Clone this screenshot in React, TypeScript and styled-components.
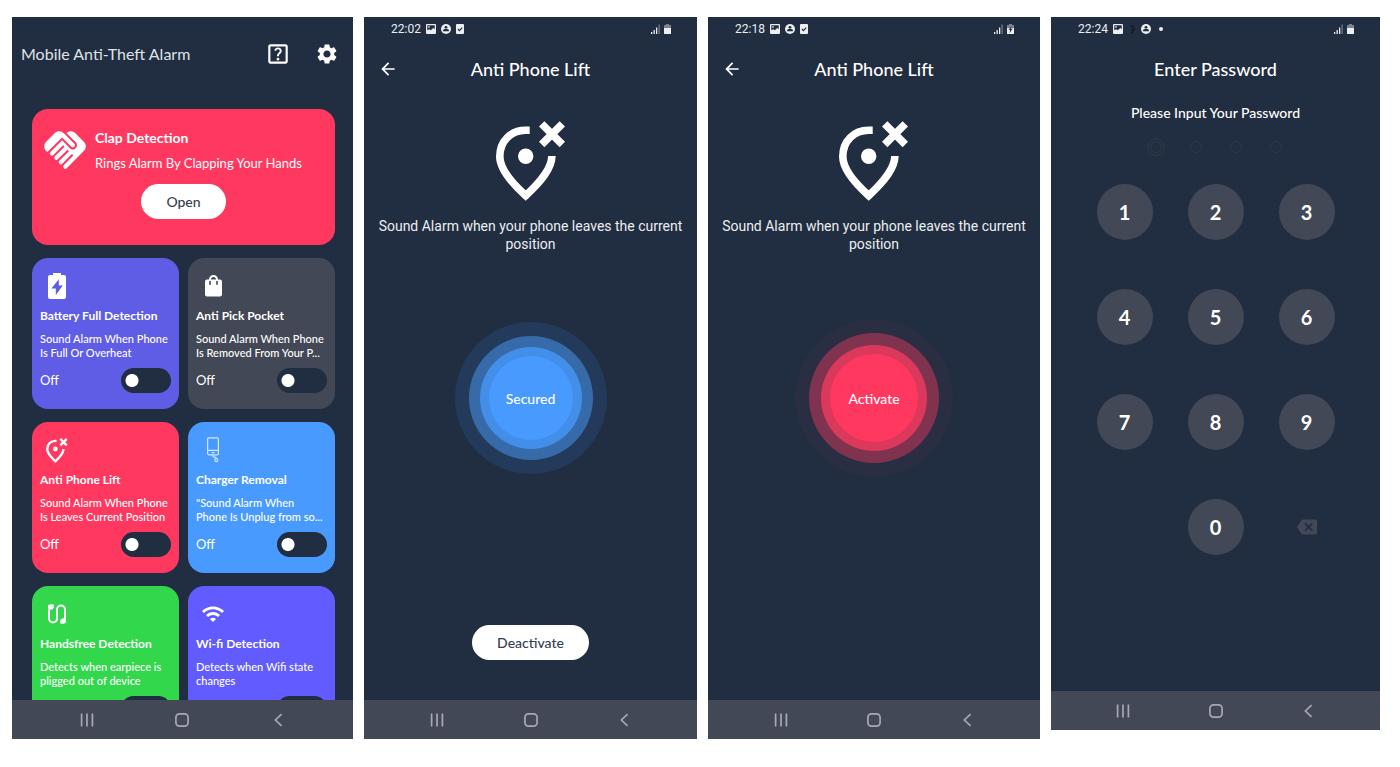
import React from "react";
import styled, { createGlobalStyle, css } from "styled-components";
import {
  MdArrowBack,
  MdBackspace,
  MdHandshake,
  MdOutlineHelpCenter,
  MdSettings,
  MdWifi,
} from "react-icons/md";

const color = {
  night: "#212d40",
  slate: "#424855",
  red: "#ff385f",
  blue: "#489aff",
  indigo: "#5f5ce6",
  violet: "#625bff",
  green: "#32d74b",
  faint: "#303a4d",
  navIcon: "#a5a9b3",
};

const GlobalStyle = createGlobalStyle`
  * { box-sizing: border-box; }
  body {
    margin: 0;
    background: #fff;
    color: #fff;
    font-family: Lato, "Open Sans", sans-serif;
  }
  h1, h2, p { margin: 0; font-weight: 400; }
  button { border: 0; padding: 0; font: inherit; color: inherit; background: none; cursor: pointer; }
  svg { display: block; flex: none; }
`;

const Gallery = styled.main`
  display: grid;
  grid-template-columns: 341fr 333fr 332fr 329fr;
  grid-template-rows: minmax(0, 1fr);
  gap: 11px;
  height: 100vh;
  min-height: 740px;
  padding: 17px 20px 28px 12px;

  @media (max-width: 1180px) {
    grid-template-columns: 1fr 1fr;
    grid-template-rows: none;
    grid-auto-rows: 722px;
    height: auto;
  }
`;

const Phone = styled.section<{ $short?: boolean }>`
  display: flex;
  flex-direction: column;
  min-width: 0;
  background: ${color.night};
  margin-bottom: ${(p) => (p.$short ? "9px" : "0")};
`;

const Screen = styled.div`
  display: flex;
  flex: 1;
  flex-direction: column;
  align-items: center;
  min-height: 0;
`;

/* ---------- system bars ---------- */

const NavBar = styled.nav`
  display: grid;
  grid-template-columns: repeat(3, 1fr);
  flex: none;
  height: 39px;
  padding: 0 8%;
  background: ${color.slate};
  color: ${color.navIcon};
`;

const NavButton = styled.button`
  display: flex;
  align-items: center;
  justify-content: center;
`;

const StatusBar = styled.div`
  display: flex;
  flex: none;
  align-items: center;
  justify-content: space-between;
  height: 24px;
  padding: 0 26px 0 27px;
  color: #eceef1;
  font: 12px/24px Roboto, sans-serif;
`;

const StatusGroup = styled.div<{ $gap: number }>`
  display: flex;
  align-items: center;
  gap: ${(p) => p.$gap}px;
`;

const SystemNav = () => (
  <NavBar aria-label="System navigation">
    <NavButton aria-label="Recent apps">
      <svg width="14" height="14" viewBox="0 0 14 14" stroke="currentColor" strokeWidth="1.7">
        <path d="M1.6 .6v12.800M7 .6v12.800M12.4 .6v12.800" />
      </svg>
    </NavButton>
    <NavButton aria-label="Home">
      <svg width="14" height="14" viewBox="0 0 14 14" fill="none" stroke="currentColor" strokeWidth="1.7">
        <rect x="0.9" y="0.9" width="12.2" height="12.2" rx="3.6" />
      </svg>
    </NavButton>
    <NavButton aria-label="Back">
      <svg width="14" height="14" viewBox="0 0 14 14" fill="none" stroke="currentColor" strokeWidth="1.7">
        <path d="M10.6 1.2 4.4 7l6.2 5.8" />
      </svg>
    </NavButton>
  </NavBar>
);

const PictureIcon = () => (
  <svg width="10" height="10" viewBox="0 0 10 10" fill="currentColor">
    <path fillRule="evenodd" d="M1 0h8a1 1 0 0 1 1 1v8a1 1 0 0 1-1 1H1a1 1 0 0 1-1-1V1a1 1 0 0 1 1-1zm.3 1.3v4.9l2-1 1.6 1L7.200 3.900 8.700 5.200V1.300z" />
    <circle cx="3" cy="2.900" r=".8" />
  </svg>
);

const PersonIcon = () => (
  <svg width="10" height="10" viewBox="0 0 10 10">
    <circle cx="5" cy="5" r="5" fill="currentColor" />
    <circle cx="5" cy="3.300" r="1.400" fill={color.night} />
    <path d="M2.100 7.300V5.900c0-.5 1.200-1 2.900-1s2.900.5 2.900 1v1.400z" fill={color.night} />
  </svg>
);

const TaskIcon = () => (
  <svg width="8" height="10" viewBox="0 0 8 10">
    <rect width="8" height="10" rx="1" fill="currentColor" />
    <path d="m2 5 1.500 1.600L6.200 3.600" fill="none" stroke={color.night} strokeWidth="1.200" />
  </svg>
);

const GhostIcon = () => (
  <svg width="8" height="10" viewBox="1 0 8 10" fill="none" strokeWidth="1.200">
    <path d="M3 2.200h4.500L6.800 7" stroke="#14171f" />
    <path d="M5.400 4.200v4.600H3.600" stroke="#14171f" />
    <path d="M7.800 1.600v1.600" stroke="#4a2a3a" />
  </svg>
);

const SignalIcon = () => (
  <svg width="9" height="10" viewBox="0 0 9 10" fill="currentColor">
    <path d="M0 8h1.300v2H0zM2.500 6h1.300v4H2.500zM5 3.500h1.300V10H5z" />
    <path d="M7.500.5h1.300V10H7.500z" opacity=".4" />
  </svg>
);

const BatteryIcon = ({ charging }: { charging?: boolean }) => (
  <svg width="7" height="10" viewBox="0 0 7 10" fill="currentColor">
    <path d="M2 0h3v1h2v3H0V1h2z" opacity=".45" />
    <path d="M0 4h7v5.500a.5.5 0 0 1-.5.5h-6a.5.5 0 0 1-.5-.5z" />
    {charging && <path d="M4.600 2 1.500 5.800h1.700L2.600 9l3-4.200H3.900z" fill={color.night} />}
  </svg>
);

const NoticeDot = styled.span`
  width: 4px;
  height: 4px;
  margin-left: 3px;
  border-radius: 50%;
  background: currentColor;
`;

type StatusProps = { time: string; charging?: boolean; overflow?: boolean };

const Status = ({ time, charging, overflow }: StatusProps) => (
  <StatusBar>
    <StatusGroup $gap={5}>
      <time>{time}</time>
      <PictureIcon />
      {overflow && <GhostIcon />}
      <PersonIcon />
      {overflow ? <NoticeDot /> : <TaskIcon />}
    </StatusGroup>
    <StatusGroup $gap={4}>
      <SignalIcon />
      <BatteryIcon charging={charging} />
    </StatusGroup>
  </StatusBar>
);

/* ---------- shared pieces ---------- */

const AppBar = styled.header`
  display: grid;
  grid-template-columns: 40px 1fr 40px;
  align-items: center;
  align-self: stretch;
  height: 56px;
  flex: none;
`;

const BackButton = styled.button`
  display: flex;
  justify-content: flex-end;
  padding-right: 6px;
`;

const ScreenTitle = styled.h1`
  grid-column: 2;
  font-size: 18px;
  line-height: 24px;
  font-weight: 500;
  text-align: center;
`;

const PillButton = styled.button<{ $wide?: boolean }>`
  flex: none;
  width: ${(p) => (p.$wide ? "117px" : "85px")};
  height: 35px;
  border-radius: 18px;
  background: #fff;
  color: #364052;
  font-size: 14px;
  font-weight: 500;
`;

const PinOffIcon = ({ width, height }: { width: number; height: number }) => (
  <svg width={width} height={height} viewBox="0 0 70 80" fill="none" stroke="#fff" strokeWidth="7.600">
    <path d="M33.700 9.300H29.700C15 9.300 3.800 20 3.800 35.500 3.800 47 13 59.500 29.700 74.600 46 59.500 55.700 47 55.900 35" />
    <path d="M45.700 2.900 66.300 23.500M66.300 2.900 45.700 23.500" />
    <circle cx="29.700" cy="35.200" r="7.700" fill="#fff" stroke="none" />
  </svg>
);

/* ---------- home screen ---------- */

const HomeHeader = styled.header`
  display: flex;
  flex: none;
  align-items: center;
  gap: 24px;
  height: 73px;
  padding: 0 14px 0 9px;
`;

const HomeTitle = styled.h1`
  flex: 1;
  color: #dfe2e7;
  font-size: 16px;
  line-height: 24px;
`;

const CardList = styled.div`
  flex: 1;
  min-height: 0;
  overflow-y: auto;
  scrollbar-width: none;
  padding: 19px 18px 13px 20px;
`;

const HeroCard = styled.article`
  display: flex;
  flex-direction: column;
  align-items: center;
  height: 136px;
  padding: 16px 8px;
  border-radius: 16px;
  background: ${color.red};
`;

const HeroTop = styled.div`
  display: flex;
  align-items: center;
  align-self: stretch;
  gap: 5px;
  margin-bottom: 9px;
`;

const HeroTitle = styled.h2`
  font-size: 14px;
  line-height: 26px;
  font-weight: 700;
`;

const HeroText = styled.p`
  font-size: 13px;
  line-height: 24px;
`;

const CardGrid = styled.div`
  display: grid;
  grid-template-columns: 1fr 1fr;
  gap: 13px 9px;
  margin-top: 13px;
`;

const Card = styled.article<{ $color: string }>`
  padding: 14px 8px 16px;
  border-radius: 16px;
  background: ${(p) => p.$color};
`;

const CardIcon = styled.div`
  display: flex;
  align-items: center;
  justify-content: center;
  width: 34px;
  height: 28px;
`;

const CardTitle = styled.h2`
  margin-top: 5px;
  font-size: 12px;
  line-height: 21px;
  font-weight: 700;
  white-space: nowrap;
`;

const CardText = styled.p`
  margin: 6px 0 8px;
  font-size: 11px;
  line-height: 14px;
  font-weight: 500;
  white-space: pre-line;
`;

const SwitchRow = styled.label`
  display: flex;
  align-items: center;
  justify-content: space-between;
  font-size: 13px;
  line-height: 25px;
`;

const Switch = styled.input`
  appearance: none;
  width: 50px;
  height: 25px;
  margin: 0;
  border-radius: 13px;
  background: radial-gradient(circle at 11px 50%, #fff 6px, transparent 7px) ${color.night};

  &:checked {
    background: radial-gradient(circle at 39px 50%, #fff 6px, transparent 7px) ${color.night};
  }
`;

const BatteryBoltIcon = () => (
  <svg width="18" height="26" viewBox="0 0 18 26">
    <path d="M5 0h8v2h3a2 2 0 0 1 2 2v20a2 2 0 0 1-2 2H2a2 2 0 0 1-2-2V4a2 2 0 0 1 2-2h3z" fill="#fff" />
    <path d="M10.800 6.200 3.400 15.400h4.400v6.600l7-9.600h-4z" fill={color.indigo} />
  </svg>
);

const BagIcon = () => (
  <svg width="17" height="22" viewBox="0 0 17 22">
    <path d="M5 6V4.500a3.500 3.500 0 0 1 7 0V6" fill="none" stroke="#fff" strokeWidth="2" />
    <rect y="4.500" width="17" height="17" rx="2" fill="#fff" />
    <path d="M5 6.500v2.700M12 6.500v2.700" stroke={color.slate} strokeWidth="1.600" strokeLinecap="round" />
  </svg>
);

const ChargerIcon = () => (
  <svg width="14" height="26" viewBox="0 0 14 26" fill="none" stroke="#d4e8ff" strokeWidth="1.200">
    <rect x="1.600" y=".8" width="10.800" height="17" rx="1.400" />
    <path d="M1.600 13.400h10.800M5.500 15.600h3" />
    <path d="M7 18v1.200c0 1.300 3.300.4 3.300 2" />
    <circle cx="10.300" cy="23.200" r="1.500" />
  </svg>
);

const EarphonesIcon = () => (
  <svg width="20" height="20" viewBox="0 0 20 20">
    <path d="M2 5v9.500a4 4 0 0 0 8 0v-9a4 4 0 0 1 8 0V15" fill="none" stroke="#fff" strokeWidth="2" />
    <path d="M1 2.400C1 .9 2.300.2 3.700.2h1.800c1 0 1.300.6 1.300 1.400v1.200c0 1.600-1 2.600-2.500 2.800L1 6.600z" fill="#fff" />
    <path d="M19 17.600c0 1.500-1.300 2.200-2.700 2.200h-1.800c-1 0-1.300-.6-1.300-1.400v-1.200c0-1.600 1-2.600 2.500-2.800l3.300-1z" fill="#fff" />
  </svg>
);

const features = [
  { name: "Battery Full Detection", text: "Sound Alarm When Phone\nIs Full Or Overheat", tint: color.indigo, icon: <BatteryBoltIcon /> },
  { name: "Anti Pick Pocket", text: "Sound Alarm When Phone\nIs Removed From Your P...", tint: color.slate, icon: <BagIcon /> },
  { name: "Anti Phone Lift", text: "Sound Alarm When Phone\nIs Leaves Current Position", tint: color.red, icon: <PinOffIcon width={22} height={25} /> },
  { name: "Charger Removal", text: "\"Sound Alarm When\nPhone Is Unplug from so...", tint: color.blue, icon: <ChargerIcon /> },
  { name: "Handsfree Detection", text: "Detects when earpiece is\npligged out of device", tint: color.green, icon: <EarphonesIcon /> },
  { name: "Wi-fi Detection", text: "Detects when Wifi state\nchanges", tint: color.violet, icon: <MdWifi size={24} /> },
];

const Home = () => (
  <Phone>
    <HomeHeader>
      <HomeTitle>Mobile Anti-Theft Alarm</HomeTitle>
      <button aria-label="Help"><MdOutlineHelpCenter size={26} /></button>
      <button aria-label="Settings"><MdSettings size={24} /></button>
    </HomeHeader>
    <CardList>
      <HeroCard>
        <HeroTop>
          <MdHandshake size={50} />
          <div>
            <HeroTitle>Clap Detection</HeroTitle>
            <HeroText>Rings Alarm By Clapping Your Hands</HeroText>
          </div>
        </HeroTop>
        <PillButton>Open</PillButton>
      </HeroCard>
      <CardGrid>
        {features.map((f) => (
          <Card key={f.name} $color={f.tint}>
            <CardIcon>{f.icon}</CardIcon>
            <CardTitle>{f.name}</CardTitle>
            <CardText>{f.text}</CardText>
            <SwitchRow>
              Off
              <Switch type="checkbox" role="switch" />
            </SwitchRow>
          </Card>
        ))}
      </CardGrid>
    </CardList>
    <SystemNav />
  </Phone>
);

/* ---------- phone lift screens ---------- */

const LiftArt = styled.div`
  margin: 24px 0 16px;
`;

const LiftText = styled.p`
  padding: 0 12px;
  color: #eceef1;
  font: 14px/18px Roboto, sans-serif;
  text-align: center;
`;

const RingSpace = styled.div`
  display: flex;
  flex: none;
  align-items: center;
  justify-content: center;
  height: 158px;
  margin-top: 66px;
`;

const RingButton = styled.button<{ $armed?: boolean }>`
  border-radius: 50%;
  font-size: 14px;
  font-weight: 500;
  ${(p) =>
    p.$armed
      ? css`
          width: 84px;
          height: 84px;
          background: ${color.blue};
          box-shadow: 0 0 0 9px #438ee9, 0 0 0 20px #366aa9, 0 0 0 34px #243a5a;
        `
      : css`
          width: 88px;
          height: 88px;
          background: ${color.red};
          box-shadow: 0 0 0 9px #db395b, 0 0 0 21px #80334f, 0 0 0 35px #2a2e43;
        `}
`;

const BottomAction = styled.div`
  margin: auto 0 40px;
`;

const PhoneLift = ({ time, armed, charging }: { time: string; armed?: boolean; charging?: boolean }) => (
  <Phone>
    <Status time={time} charging={charging} />
    <Screen>
      <AppBar>
        <BackButton aria-label="Back"><MdArrowBack size={20} /></BackButton>
        <ScreenTitle>Anti Phone Lift</ScreenTitle>
      </AppBar>
      <LiftArt><PinOffIcon width={70} height={80} /></LiftArt>
      <LiftText>Sound Alarm when your phone leaves the current position</LiftText>
      <RingSpace>
        <RingButton $armed={armed}>{armed ? "Secured" : "Activate"}</RingButton>
      </RingSpace>
      {armed && (
        <BottomAction>
          <PillButton $wide>Deactivate</PillButton>
        </BottomAction>
      )}
    </Screen>
    <SystemNav />
  </Phone>
);

/* ---------- password screen ---------- */

const Prompt = styled.p`
  margin-top: 6px;
  font-size: 14px;
  line-height: 20px;
  font-weight: 500;
`;

const PinRow = styled.div`
  display: flex;
  gap: 28px;
  margin-top: 18px;
`;

const PinDigit = styled.input<{ $current?: boolean }>`
  appearance: none;
  width: 12px;
  height: 12px;
  padding: 0;
  border: 1px solid ${color.faint};
  border-radius: 50%;
  background: transparent;
  outline: ${(p) => (p.$current ? `1px solid ${color.faint}` : "none")};
  outline-offset: 2px;
`;

const Keypad = styled.div`
  display: grid;
  grid-template-columns: repeat(3, 56px);
  gap: 49px 35px;
  margin-top: 31px;
`;

const Key = styled.button`
  height: 56px;
  border-radius: 50%;
  background: ${color.slate};
  font-size: 20px;
  font-weight: 700;
`;

const DeleteKey = styled.button`
  display: flex;
  align-items: center;
  justify-content: center;
  color: ${color.slate};
`;

const EnterPassword = () => (
  <Phone $short>
    <Status time="22:24" overflow />
    <Screen>
      <AppBar>
        <ScreenTitle>Enter Password</ScreenTitle>
      </AppBar>
      <Prompt>Please Input Your Password</Prompt>
      <PinRow>
        {[1, 2, 3, 4].map((n) => (
          <PinDigit key={n} type="password" maxLength={1} aria-label={`Digit ${n}`} $current={n === 1} />
        ))}
      </PinRow>
      <Keypad>
        {[1, 2, 3, 4, 5, 6, 7, 8, 9].map((n) => (
          <Key key={n}>{n}</Key>
        ))}
        <span />
        <Key>0</Key>
        <DeleteKey aria-label="Delete"><MdBackspace size={20} /></DeleteKey>
      </Keypad>
    </Screen>
    <SystemNav />
  </Phone>
);

export default function App() {
  return (
    <>
      <GlobalStyle />
      <Gallery>
        <Home />
        <PhoneLift time="22:02" armed />
        <PhoneLift time="22:18" charging />
        <EnterPassword />
      </Gallery>
    </>
  );
}
